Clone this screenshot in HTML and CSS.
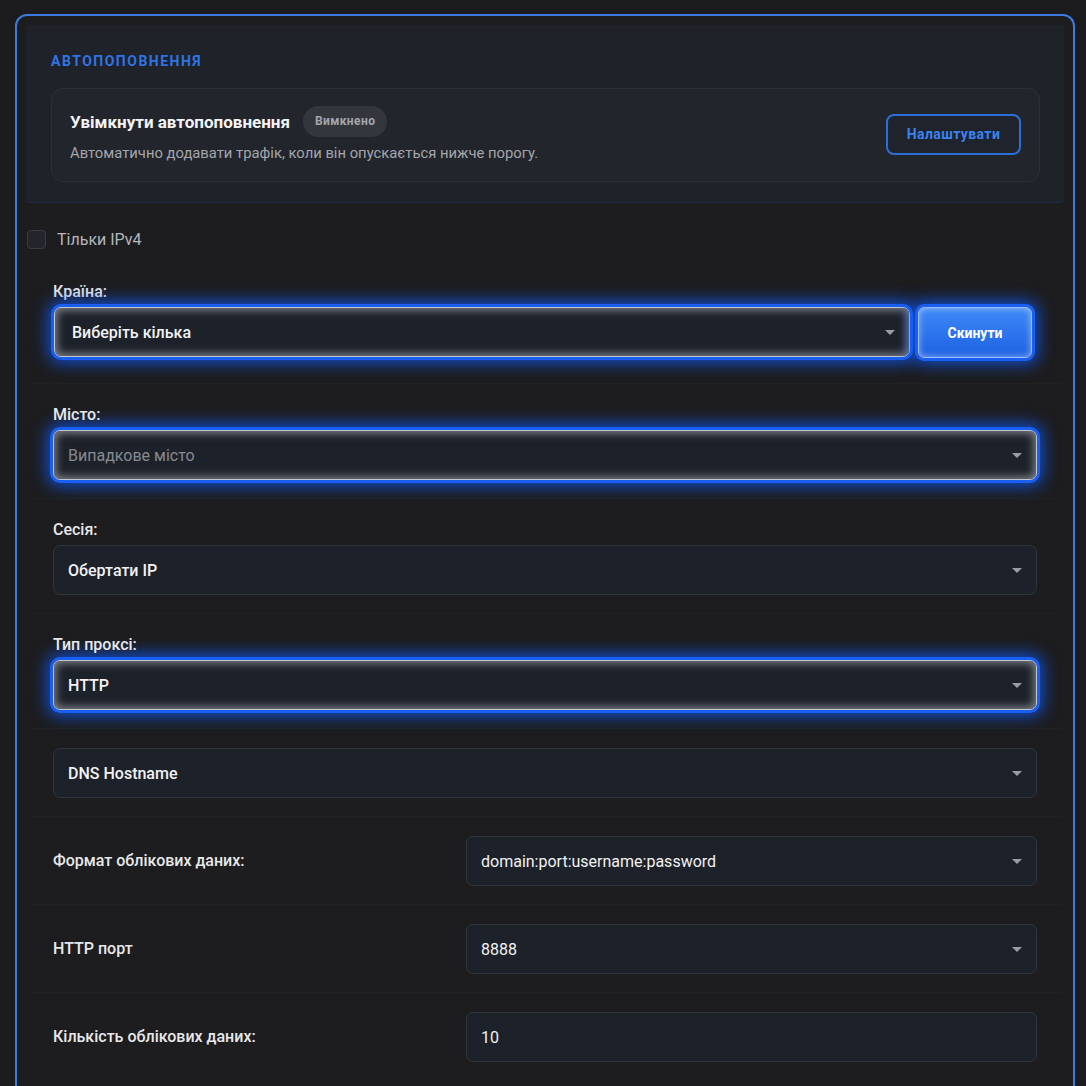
FILE: index.html
```html
<!DOCTYPE html>
<html lang="uk">
  <head>
    <meta charset="UTF-8" />
    <meta name="viewport" content="width=device-width, initial-scale=1.0" />
    <title>Налаштування проксі</title>
    <link rel="stylesheet" href="styles.css">
  </head>
  <body>
    <div class="panel">
      <section class="topup">
        <h3 class="topup-title">Автопоповнення</h3>
        <div class="topup-card">
          <div class="topup-text">
            <div class="topup-head">
              <span class="topup-name">Увімкнути автопоповнення</span>
              <span class="badge">Вимкнено</span>
            </div>
            <p class="topup-desc">Автоматично додавати трафік, коли він опускається нижче порогу.</p>
          </div>
          <button class="btn-outline">Налаштувати</button>
        </div>
      </section>

      <label class="check">
        <span class="check-box"></span>
        <span>Тільки IPv4</span>
      </label>

      <div class="row row-country">
        <div class="label">Країна:</div>
        <div class="country">
          <div class="select glow">
            <span class="value">Виберіть кілька</span>
            <svg class="caret" viewBox="0 0 10 5"><path d="M0 0h10L5 5z" /></svg>
          </div>
          <button class="btn-reset">Скинути</button>
        </div>
      </div>

      <div class="row">
        <div class="label">Місто:</div>
        <div class="select glow">
          <span class="placeholder">Випадкове місто</span>
          <svg class="caret" viewBox="0 0 10 5"><path d="M0 0h10L5 5z" /></svg>
        </div>
      </div>

      <div class="row">
        <div class="label">Сесія:</div>
        <div class="select">
          <span class="value">Обертати IP</span>
          <svg class="caret" viewBox="0 0 10 5"><path d="M0 0h10L5 5z" /></svg>
        </div>
      </div>

      <div class="row">
        <div class="label">Тип проксі:</div>
        <div class="select glow">
          <span class="value">HTTP</span>
          <svg class="caret" viewBox="0 0 10 5"><path d="M0 0h10L5 5z" /></svg>
        </div>
      </div>

      <div class="row">
        <div class="select">
          <span class="value">DNS Hostname</span>
          <svg class="caret" viewBox="0 0 10 5"><path d="M0 0h10L5 5z" /></svg>
        </div>
      </div>

      <div class="row row-inline">
        <div class="label">Формат облікових даних:</div>
        <div class="select">
          <span class="value light">domain:port:username:password</span>
          <svg class="caret" viewBox="0 0 10 5"><path d="M0 0h10L5 5z" /></svg>
        </div>
      </div>

      <div class="row row-inline">
        <div class="label">HTTP порт</div>
        <div class="select">
          <span class="value light">8888</span>
          <svg class="caret" viewBox="0 0 10 5"><path d="M0 0h10L5 5z" /></svg>
        </div>
      </div>

      <div class="row row-inline">
        <div class="label">Кількість облікових даних:</div>
        <input class="select input" type="text" value="10" />
      </div>
    </div>
  </body>
</html>
```

FILE: styles.css
```css
* {
  margin: 0;
  padding: 0;
  box-sizing: border-box;
}

body {
  font-family: "Roboto", "Noto Sans", sans-serif;
  background: #1c1c1e;
  color: #ececee;
  padding: 14px 11px 0 15px;
  overflow: hidden;
}

.panel {
  border: 2px solid #3b7be0;
  border-radius: 12px;
  padding: 9px 9px 30px 9px;
  background: #1d1d1f;
  min-height: 1100px;
}

/* autofill block */
.topup {
  background: #1f2228;
  border-bottom: 1px solid #1c2c45;
  border-radius: 4px;
  padding: 29px 24px 20px 25px;
}

.topup-title {
  color: #2f74e6;
  font-size: 14px;
  font-weight: 700;
  letter-spacing: 1.5px;
  text-transform: uppercase;
  line-height: 15px;
  margin-bottom: 19px;
}

.topup-card {
  display: flex;
  align-items: center;
  justify-content: space-between;
  background: #22252b;
  border: 1px solid #2c2f36;
  border-radius: 12px;
  padding: 17px 18px 19px 18px;
}

.topup-head {
  display: flex;
  align-items: center;
  gap: 13px;
}

.topup-name {
  font-size: 17px;
  font-weight: 700;
  color: #f4f4f6;
}

.badge {
  background: #33363d;
  color: #a4a7ad;
  font-size: 12px;
  font-weight: 700;
  letter-spacing: 0.4px;
  border-radius: 16px;
  padding: 0 12px;
  line-height: 31px;
}

.topup-desc {
  font-size: 14.8px;
  color: #a3a6ab;
  margin-top: 7px;
}

.btn-outline {
  font-family: inherit;
  background: #1f232b;
  border: 2px solid #2d6fd8;
  border-radius: 8px;
  color: #3a82f2;
  font-size: 14px;
  font-weight: 700;
  letter-spacing: 0.4px;
  width: 135px;
  height: 41px;
}

/* checkbox */
.check {
  display: flex;
  align-items: center;
  gap: 11px;
  margin: 27px 0 13px 1px;
  font-size: 16px;
  line-height: 19px;
  color: #b4b7bc;
}

.check-box {
  width: 19px;
  height: 19px;
  border: 1.5px solid #393c43;
  border-radius: 4px;
  background: #22252c;
}

/* form rows */
.row {
  margin: 0 3px;
  padding: 20px 24px 18px 24px;
  box-shadow: inset 0 1px rgba(255, 255, 255, 0.025);
}

.row-country {
  box-shadow: none;
  padding-bottom: 25px;
}

.label {
  font-size: 16px;
  font-weight: 500;
  line-height: 20px;
  padding-top: 2px;
  color: #e8e8ea;
  margin-bottom: 5px;
}

.row-country .label {
  padding-top: 0;
}

.country {
  display: flex;
  gap: 8px;
  margin: 5px 5px 0 1px;
}

.country .select {
  flex: 1;
}

.select {
  display: flex;
  align-items: center;
  justify-content: space-between;
  height: 50px;
  background: #1d2129;
  border: 1px solid #30343c;
  border-radius: 7px;
  padding: 0 14px;
}

.value {
  font-size: 16px;
  font-weight: 500;
  color: #f2f2f4;
}

.value.light {
  font-weight: 400;
}

.placeholder {
  font-size: 16px;
  color: #868a91;
}

.caret {
  width: 10px;
  height: 5px;
  fill: #9a9da4;
}

.glow {
  border-color: #c2c6cd;
  box-shadow: inset 0 0 8px 2px rgba(215, 220, 230, 0.55),
    0 0 0 3px #1b5ff0, 0 0 16px 6px rgba(12, 90, 255, 0.8);
}

.country .glow .value {
  margin-left: 3px;
}

.btn-reset {
  font-family: inherit;
  width: 114px;
  height: 51px;
  border: 1px solid #9cbfff;
  border-radius: 6px;
  background: linear-gradient(180deg, #3e8af8, #1d60e2);
  color: #ffffff;
  font-size: 14px;
  font-weight: 700;
  box-shadow: inset 0 0 7px rgba(205, 225, 255, 0.65),
    0 0 0 3px #1b5ff0, 0 0 16px 6px rgba(12, 90, 255, 0.8);
}

.row-inline {
  display: grid;
  grid-template-columns: 413px 1fr;
  align-items: center;
}

.row-inline .label {
  margin-bottom: 0;
  padding-top: 0;
}

.input {
  font-family: inherit;
  font-size: 16px;
  color: #f2f2f4;
  width: 100%;
  outline: none;
}
```
